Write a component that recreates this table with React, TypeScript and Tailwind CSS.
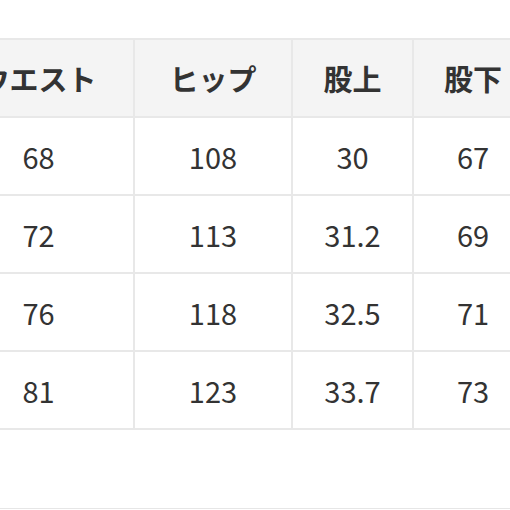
const headers = ["ウエスト", "ヒップ", "股上", "股下"];

const rows = [
  ["68", "108", "30", "67"],
  ["72", "113", "31.2", "69"],
  ["76", "118", "32.5", "71"],
  ["81", "123", "33.7", "73"],
];

export default function App() {
  return (
    <div
      className="w-[510px] h-[510px] overflow-hidden bg-white flex flex-col"
      style={{ fontFamily: '"Noto Sans CJK JP", "Noto Sans", sans-serif' }}
    >
      <div className="pt-[38px]">
        <table className="ml-[-58px] border-collapse text-[#333] table-fixed w-[590px]">
          <colgroup>
            <col className="w-[191px]" />
            <col className="w-[158px]" />
            <col className="w-[121px]" />
            <col className="w-[120px]" />
          </colgroup>
          <thead>
            <tr className="h-[78px] bg-[#f4f4f4]">
              {headers.map((h) => (
                <th
                  key={h}
                  className="border-2 border-[#e8e8e8] text-[29px] font-bold text-center align-middle leading-none"
                >
                  {h}
                </th>
              ))}
            </tr>
          </thead>
          <tbody>
            {rows.map((r, i) => (
              <tr key={i} className="h-[78px]">
                {r.map((v, j) => (
                  <td
                    key={j}
                    className="border-2 border-[#e8e8e8] text-[29px] font-normal text-center align-middle leading-none"
                  >
                    {v}
                  </td>
                ))}
              </tr>
            ))}
          </tbody>
        </table>
      </div>
      <div className="mt-auto mb-[1px] h-px bg-[#e6e6e6]" />
    </div>
  );
}
